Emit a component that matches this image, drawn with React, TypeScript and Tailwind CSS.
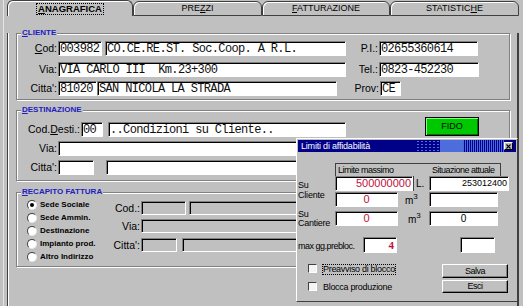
import React from "react";

function Field({
  className = "",
  gray = false,
  children,
}: {
  className?: string;
  gray?: boolean;
  children?: React.ReactNode;
}) {
  return (
    <div
      className={`flex shrink-0 items-center overflow-hidden whitespace-nowrap border border-t-[#808080] border-l-[#808080] border-r-white border-b-white shadow-[inset_1px_1px_0_#000] ${
        gray ? "bg-[#c0c0c0]" : "bg-white"
      } ${className}`}
    >
      {children}
    </div>
  );
}

function Mono({ children }: { children: React.ReactNode }) {
  return (
    <span className="whitespace-pre pl-[1px] font-['Liberation_Mono','Courier_New',monospace] text-[12px] leading-none tracking-[-0.65px] text-[#101010]">
      {children}
    </span>
  );
}

function Label({ className = "", children }: { className?: string; children: React.ReactNode }) {
  return (
    <div className={`shrink-0 pr-[1px] text-right text-[10.5px] leading-none text-black ${className}`}>
      {children}
    </div>
  );
}

function Group({
  title,
  className = "",
  children,
}: {
  title: React.ReactNode;
  className?: string;
  children?: React.ReactNode;
}) {
  return (
    <div
      className={`relative ml-[8px] w-[494px] border border-[#808080] shadow-[inset_1px_1px_0_#fff,1px_1px_0_#fff] ${className}`}
    >
      <div className="absolute left-[4px] top-[-6px] bg-[#c0c0c0] px-[1px] text-[8px] font-bold leading-[10px] text-[#2020c0]">
        {title}
      </div>
      {children}
    </div>
  );
}

function Tab({
  active = false,
  className = "",
  children,
}: {
  active?: boolean;
  className?: string;
  children: React.ReactNode;
}) {
  return (
    <div
      className={`flex shrink-0 items-center justify-center rounded-t-[6px] border border-[#404040] bg-[#c0c0c0] shadow-[inset_1px_1px_0_#fff] ${
        active ? "h-[16px] border-b-0" : "h-[15px]"
      } ${className}`}
    >
      {children}
    </div>
  );
}

function Radio({ checked = false }: { checked?: boolean }) {
  return (
    <span className="flex h-[10px] w-[10px] shrink-0 items-center justify-center rounded-full border border-t-[#404040] border-l-[#404040] border-r-[#e8e8e8] border-b-[#e8e8e8] bg-white">
      {checked && <span className="h-[4px] w-[4px] rounded-full bg-black" />}
    </span>
  );
}

function Check() {
  return (
    <span className="h-[9px] w-[9px] shrink-0 border border-t-[#404040] border-l-[#404040] border-r-white border-b-white bg-[#f4f4f4]" />
  );
}

function Btn({ className = "", children }: { className?: string; children: React.ReactNode }) {
  return (
    <div
      className={`flex w-[66px] items-center justify-center border border-t-white border-l-white border-r-black border-b-black bg-[#c0c0c0] text-[9px] leading-none tracking-[-0.5px] shadow-[inset_-1px_-1px_0_#808080] ${className}`}
    >
      {children}
    </div>
  );
}

const RED = "text-[#c0103c]";

export default function App() {
  const radios = ["Sede Sociale", "Sede Ammin.", "Destinazione", "Impianto prod.", "Altro Indirizzo"];
  return (
    <div className="relative h-[306px] w-[523px] overflow-hidden bg-[#c0c0c0] pl-[3px] font-['Liberation_Sans',Arial,sans-serif] text-black">
      <div className="h-full border-l border-[#e4e4e4]">
        {/* tabs */}
        <div className="flex h-[16px] items-end pl-[3px]">
          <Tab active className="w-[126px]">
            <span className="border border-dotted border-black px-[1px] text-[9.5px] font-bold leading-[10px]">
              <u>A</u>NAGRAFICA
            </span>
          </Tab>
          <Tab className="w-[129px]">
            <span className="text-[9px] leading-none">
              PRE<u>Z</u>ZI
            </span>
          </Tab>
          <Tab className="w-[128px]">
            <span className="text-[9px] leading-none">
              <u>F</u>ATTURAZIONE
            </span>
          </Tab>
          <Tab className="w-[129px]">
            <span className="text-[9px] leading-none">
              STATISTIC<u>H</u>E
            </span>
          </Tab>
        </div>

        {/* panel */}
        <div className="ml-[3px] h-[287px] w-[512px] border-b-2 border-l border-r-2 border-b-[#404040] border-l-[#404040] border-r-[#404040] shadow-[inset_1px_0_0_#fff]">
          {/* CLIENTE */}
          <Group title={<><u>C</u>LIENTE</>} className="mt-[17px] h-[67px]">
            <div className="flex flex-col pt-[7px]">
              <div className="flex h-[15px] items-center">
                <Label className="w-[41px]">
                  <u>C</u>od:
                </Label>
                <Field className="h-[15px] w-[44px]">
                  <Mono>003982</Mono>
                </Field>
                <Field className="ml-[3px] h-[15px] w-[241px]">
                  <Mono>CO.CE.RE.ST. Soc.Coop. A R.L.</Mono>
                </Field>
                <Label className="w-[33px]">P.I.:</Label>
                <Field className="h-[15px] w-[99px]">
                  <Mono>02655360614</Mono>
                </Field>
              </div>
              <div className="mt-[6px] flex h-[15px] items-center">
                <Label className="w-[41px]">Via:</Label>
                <Field className="h-[15px] w-[288px]">
                  <Mono>VIA CARLO III  Km.23+300</Mono>
                </Field>
                <Label className="w-[33px]">Tel.:</Label>
                <Field className="h-[15px] w-[100px]">
                  <Mono>0823-452230</Mono>
                </Field>
              </div>
              <div className="mt-[4px] flex h-[15px] items-center">
                <Label className="w-[41px]">Citta':</Label>
                <Field className="h-[15px] w-[39px]">
                  <Mono>81020</Mono>
                </Field>
                <Field className="h-[15px] w-[240px]">
                  <Mono>SAN NICOLA LA STRADA</Mono>
                </Field>
                <Label className="w-[43px]">Prov:</Label>
                <Field className="h-[15px] w-[21px]">
                  <Mono>CE</Mono>
                </Field>
              </div>
            </div>
          </Group>

          {/* DESTINAZIONE */}
          <Group title={<><u>D</u>ESTINAZIONE</>} className="mt-[10px] h-[71px]">
            <div className="flex flex-col pt-[6px]">
              <div className="flex h-[20px] items-end">
                <Label className="mb-[3px] w-[64px]">
                  Cod.<u>D</u>esti.:
                </Label>
                <Field className="h-[15px] w-[22px]">
                  <Mono>00</Mono>
                </Field>
                <Field className="ml-[5px] h-[15px] w-[238px]">
                  <Mono>..Condizioni su Cliente..</Mono>
                </Field>
                <div className="mb-[1px] ml-[79px] flex h-[19px] w-[54px] items-center justify-center border border-black bg-[#00c800] text-[9px] leading-none shadow-[inset_1px_1px_0_#80ff80,inset_-1px_-1px_0_#007000]">
                  FIDO
                </div>
              </div>
              <div className="mt-[4px] flex h-[15px] items-center">
                <Label className="w-[41px]">Via:</Label>
                <Field className="h-[15px] w-[440px]" />
              </div>
              <div className="mt-[4px] flex h-[15px] items-center">
                <Label className="w-[41px]">Citta':</Label>
                <Field className="h-[15px] w-[36px]" />
                <Field className="ml-[12px] h-[15px] w-[390px]" />
              </div>
            </div>
          </Group>

          {/* RECAPITO FATTURA */}
          <Group title={<><u>R</u>ECAPITO FATTURA</>} className="mt-[11px] h-[75px]">
            <div className="flex">
              <div className="w-[84px] pl-[10px] pt-[5px]">
                {radios.map((r, i) => (
                  <div key={r} className="flex h-[13px] items-center gap-[3px]">
                    <Radio checked={i === 0} />
                    <span className="whitespace-nowrap text-[8px] font-bold leading-none">{r}</span>
                  </div>
                ))}
              </div>
              <div className="flex flex-col pt-[8px]">
                <div className="flex h-[14px] items-center">
                  <Label className="w-[40px]">Cod.:</Label>
                  <Field gray className="h-[14px] w-[45px]" />
                  <Field gray className="ml-[3px] h-[14px] w-[300px]" />
                </div>
                <div className="mt-[4px] flex h-[14px] items-center">
                  <Label className="w-[40px]">Via:</Label>
                  <Field gray className="h-[14px] w-[350px]" />
                </div>
                <div className="mt-[5px] flex h-[14px] items-center">
                  <Label className="w-[40px]">Citta':</Label>
                  <Field gray className="h-[14px] w-[36px]" />
                  <Field gray className="ml-[5px] h-[14px] w-[300px]" />
                </div>
              </div>
            </div>
          </Group>
        </div>
      </div>

      {/* dialog window */}
      <div className="absolute left-[296px] top-[138px] h-[164px] w-[222px] border border-t-white border-l-white border-r-[#404040] border-b-[#404040] bg-[#c0c0c0] p-[1px] text-[9px] leading-none">
        <div className="flex h-[12px] items-center bg-[#000088]">
          <span className="flex-1 whitespace-nowrap pl-[3px] text-[9px] leading-none tracking-[-0.2px] text-white">
            Limiti di affidabilità
          </span>
          <span className="h-full w-[24px] bg-[radial-gradient(circle,#5070e0_0.6px,transparent_0.9px)] bg-[length:4px_3px]" />
          <span className="h-full w-[23px] bg-[radial-gradient(circle,#5070e0_0.7px,transparent_1px)] bg-[length:2px_2px]" />
          <span className="h-full w-[41px] bg-[repeating-linear-gradient(90deg,#4868d8_0px,#4868d8_1px,#000090_1px,#000090_2px)]" />
          <span className="mr-[3px] flex h-[8px] w-[9px] items-center justify-center border border-t-white border-l-white border-r-black border-b-black bg-[#c0c0c0]">
            <svg width="5" height="5" viewBox="0 0 5 5">
              <path d="M0.5 0.5L4.5 4.5M4.5 0.5L0.5 4.5" stroke="#000" strokeWidth="1.1" />
            </svg>
          </span>
        </div>

        {/* header */}
        <div className="ml-[37px] mt-[11px] flex h-[13px] w-[166px] items-center border-l border-r border-t border-[#404040] tracking-[-0.5px]">
          <span className="w-[96px] whitespace-nowrap pl-[2px]">Limite massimo</span>
          <span className="whitespace-nowrap">Situazione attuale</span>
        </div>

        {/* rows 1-2 */}
        <div className="flex">
          <div className="w-[37px] pt-[4px] leading-[10px] tracking-[-0.2px]">
            Su
            <br />
            Cliente
          </div>
          <div className="flex flex-col">
            <div className="flex h-[15px]">
              <Field className="h-[15px] w-[78px] justify-end pr-[1px]">
                <span className={`text-[11px] leading-none ${RED}`}>500000000</span>
              </Field>
              <div className="flex h-[15px] w-[16px] items-center border-l border-[#404040] pl-[2px] text-[10px]">
                L.
              </div>
              <Field className="h-[15px] w-[80px] justify-end pr-[1px]">
                <span className="text-[9px] leading-none">253012400</span>
              </Field>
            </div>
            <div className="mt-[1px] flex h-[15px]">
              <Field className="h-[15px] w-[63px] justify-center">
                <span className={`text-[11px] leading-none ${RED}`}>0</span>
              </Field>
              <div className="flex h-[15px] w-[31px] items-center pl-[7px] pt-[3px] text-[10px]">
                m<sup className="text-[8px]">3</sup>
              </div>
              <Field className="h-[15px] w-[69px]" />
            </div>
          </div>
        </div>

        {/* row 3 */}
        <div className="mt-[4px] flex h-[15px]">
          <div className="-mt-[1px] w-[37px] leading-[9px] tracking-[-0.25px]">
            Su
            <br />
            Cantiere
          </div>
          <Field className="h-[15px] w-[63px] justify-center">
            <span className={`text-[11px] leading-none ${RED}`}>0</span>
          </Field>
          <div className="flex h-[15px] w-[31px] items-center pl-[10px] pt-[3px] text-[10px]">
            m<sup className="text-[8px]">3</sup>
          </div>
          <Field className="h-[15px] w-[69px] justify-center">
            <span className="text-[10px] leading-none">0</span>
          </Field>
        </div>

        {/* row 4 */}
        <div className="mt-[11px] flex h-[16px] items-center">
          <div className="w-[65px] whitespace-nowrap pt-[2px] tracking-[-0.5px]">max gg.prebloc.</div>
          <Field className="h-[16px] w-[34px] justify-end pr-[2px]">
            <span className={`font-['Liberation_Serif',serif] text-[11px] font-bold leading-none ${RED}`}>4</span>
          </Field>
          <Field className="ml-[63px] h-[16px] w-[35px]" />
        </div>

        {/* bottom */}
        <div className="mt-[11px] flex">
          <div className="w-[144px] pl-[10px]">
            <div className="flex h-[18px] items-start">
              <Check />
              <span className="ml-[5px] whitespace-nowrap border border-dotted border-black leading-[9px] tracking-[-0.3px]">
                Preavviso di blocco
              </span>
            </div>
            <div className="flex h-[18px] items-start">
              <Check />
              <span className="ml-[5px] whitespace-nowrap border border-transparent leading-[9px] tracking-[-0.3px]">
                Blocca produzione
              </span>
            </div>
          </div>
          <div className="flex flex-col">
            <Btn className="h-[14px]">Salva</Btn>
            <Btn className="mt-[2px] h-[13px]">Esci</Btn>
          </div>
        </div>
      </div>
    </div>
  );
}
